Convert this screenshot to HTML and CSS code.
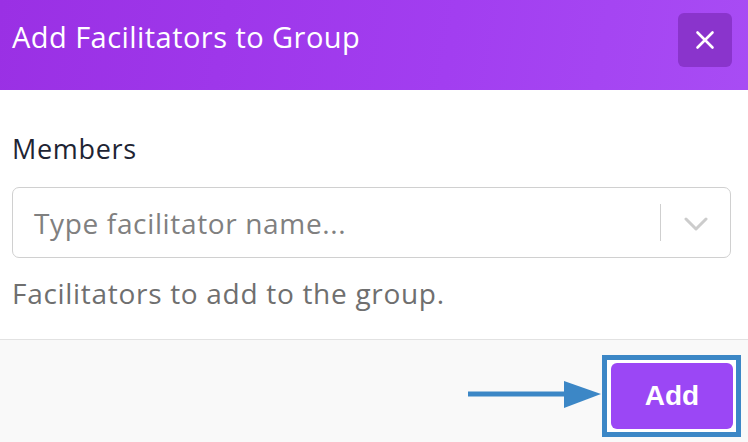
FILE: index.html
```html
<!DOCTYPE html>
<html>
<head>
<meta charset="utf-8">
<link rel="stylesheet" href="styles.css">
</head>
<body>
<div class="modal">
  <div class="modal-header">
    <h1 class="modal-title">Add Facilitators to Group</h1>
    <button class="close-btn" aria-label="Close">
      <svg width="22" height="22" viewBox="0 0 22 22"><path d="M3.5 3.5 L18.5 18.5 M18.5 3.5 L3.5 18.5" stroke="#fff" stroke-width="2.6" stroke-linecap="round"/></svg>
    </button>
  </div>
  <div class="modal-body">
    <label class="field-label">Members</label>
    <div class="select">
      <span class="placeholder">Type facilitator name...</span>
      <span class="sep"></span>
      <span class="chevron">
        <svg width="24" height="16" viewBox="0 0 24 16"><path d="M2 3 L12 13 L22 3" fill="none" stroke="#cccccc" stroke-width="3" stroke-linecap="round" stroke-linejoin="round"/></svg>
      </span>
    </div>
    <p class="help">Facilitators to add to the group.</p>
  </div>
  <div class="modal-footer">
    <svg class="arrow" width="134" height="30" viewBox="0 0 134 30"><path d="M0 14 H100" stroke="#3c87c6" stroke-width="5"/><path d="M96 1 L133 14 L96 28 Z" fill="#3c87c6"/></svg>
    <div class="highlight">
      <button class="add-btn">Add</button>
    </div>
  </div>
</div>
</body>
</html>
```
FILE: styles.css
```css
* { box-sizing: border-box; }
html, body { margin: 0; padding: 0; }
body { width: 748px; height: 442px; overflow: hidden; background: #fff; font-family: "Open Sans", "Lato", sans-serif; }
.modal { display: flex; flex-direction: column; height: 442px; }
.modal-header {
  height: 90px;
  display: flex;
  justify-content: space-between;
  align-items: flex-start;
  padding: 13px 16px 0 12px;
  background: linear-gradient(100deg, #9a30e4 0%, #a23ef0 60%, #a84cf4 100%);
}
.modal-title {
  margin: 0;
  font-size: 29px;
  line-height: 48px;
  letter-spacing: 0.45px;
  font-weight: 400;
  color: #fff;
}
.close-btn {
  width: 54px; height: 54px;
  border: 0; border-radius: 6px;
  background: #8a34cc;
  display: flex; align-items: center; justify-content: center;
  padding: 0;
}
.modal-body { padding: 44px 17px 0 12px; height: 249px; }
.field-label { display: block; font-size: 27px; color: #1e2433; line-height: 30px; letter-spacing: 0.7px; }
.select {
  margin-top: 23px;
  height: 71px;
  border: 1.5px solid #d0d0d0;
  border-radius: 7px;
  display: flex; align-items: center;
  padding-left: 21px;
}
.placeholder { flex: 1; font-size: 28px; color: #808080; letter-spacing: 0.65px; line-height: 34px; }
.sep { width: 1.5px; height: 37px; background: #cfcfcf; }
.chevron { width: 69px; display: flex; justify-content: center; align-items: center; padding-top: 2px; }
.help { margin: 18px 0 0; font-size: 28px; color: #6f6f6f; line-height: 34px; letter-spacing: 0.7px; }
.modal-footer {
  flex: 1;
  border-top: 1.5px solid #e2e2e2;
  background: #f9f9f9;
  display: flex; justify-content: flex-end; align-items: flex-start;
  padding: 15px 7px 0 0;
}
.arrow { margin-top: 25px; }
.highlight {
  border: 5px solid #3c87c6;
  padding: 3px 3px 3px 4px;
  background: #fff;
}
.add-btn {
  display: block;
  width: 122px; height: 66px;
  border: 0; border-radius: 6px;
  background: #9b47f5;
  color: #fff;
  font-family: "Liberation Sans", Arial, sans-serif;
  font-weight: 700;
  font-size: 28px;
}
```
